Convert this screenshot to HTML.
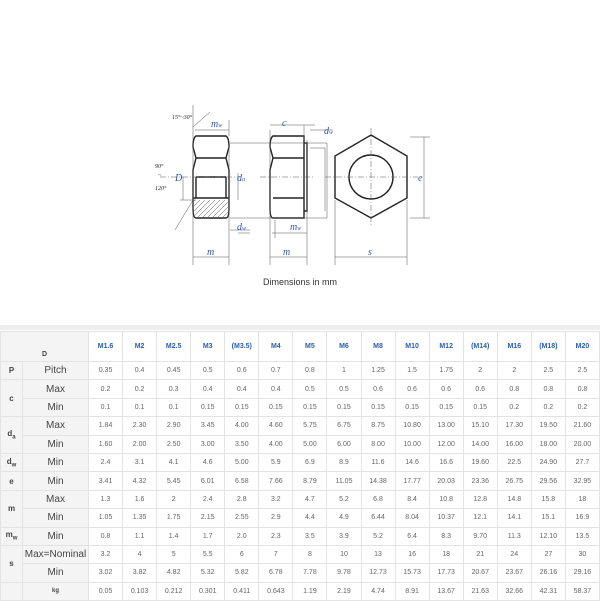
<!DOCTYPE html>
<html><head><meta charset="utf-8"><style>
body{margin:0;width:600px;height:600px;background:#fff;font-family:"Liberation Sans",sans-serif;overflow:hidden;position:relative}
#bar{position:absolute;left:0;top:325px;width:600px;height:5px;background:#eee}
table{position:absolute;left:0;top:331px;border-collapse:collapse;width:600px;table-layout:fixed}
td{border:1px solid #e3e3e3;text-align:center;font-size:7px;color:#666;height:17.4px;padding:0}
.h td{height:26px}
.g{background:#f4f4f4}
.k{font-weight:bold;color:#444;font-size:8px}
.l{font-size:10px;color:#444}
.b{color:#2a5db0;font-weight:bold;font-size:7px}
sub{font-size:6px}
</style></head><body>
<svg width="600" height="300" style="position:absolute;left:0;top:0" font-family="Liberation Serif" font-style="italic">
<g fill="none" stroke="#222" stroke-width="1.4">
<path d="M196 136 H226 Q229 138 229 147 L226 158 L229 170 V208 Q229 218 226 218 H196 Q193 218 193 208 V170 L196 158 L193 147 Q193 138 196 136Z"/>
<path d="M196 158 H226 M196 177 H226 M196 177 V198 M226 177 V198 M193 198 H229"/>
<path d="M273 136 H304 V218 H273 Q270 218 270 208 V170 L273 158 L270 147 Q270 138 273 136Z M273 158 H304 M273 198 H304 M304 143 H307 V211 H304"/>
<polygon points="371,135 407,156 407,198 371,218 335,198 335,156"/>
<circle cx="371" cy="177" r="22"/>
</g>
<g stroke="#555" stroke-width="0.5" fill="none">
<path d="M195 200 L175 220 M200 200 L182 218 M205 200 L187 218 M210 200 L192 218 M215 200 L197 218 M220 200 L202 218 M225 200 L207 218 M229 201 L212 218 M229 206 L217 218 M229 211 L222 218" clip-path="url(#c)"/>
<path d="M193 105 V265 M229 145 V265 M270 130 V265 M307 140 V265 M335 200 V265 M407 200 V265 M193 257 H229 M270 257 H307 M335 257 H407 M230 143 H327 V218 M230 218 H327 M310 148 H325 V211 M424 137 V218 M410 137 H430 M410 218 H430 M195 130 H229 M229 120 V136 M304 125 V140 M270 125 H315 M272 233 H307 M275 220 V238 M310 130 H333 M230 230 H250 M238 233 H250 M238 173 V200 M183 177 V200 M180 200 H196"/>
<path d="M160 177 H240 M260 177 H315 M325 177 H418 M371 128 V225" stroke-dasharray="6 2 1 2"/>
<path d="M193 127 L210 112 M193 200 L175 230"/>
</g>
<clipPath id="c"><rect x="193" y="199" width="36" height="19"/></clipPath>
<g fill="#3355bb" font-size="10">
<text x="211" y="127">m<tspan font-size="6">w</tspan></text>
<text x="175" y="181">D</text>
<text x="237" y="181">d<tspan font-size="6">a</tspan></text>
<text x="237" y="230">d<tspan font-size="6">w</tspan></text>
<text x="207" y="255">m</text>
<text x="283" y="255">m</text>
<text x="282" y="126">c</text>
<text x="324" y="134">d<tspan font-size="6">w</tspan></text>
<text x="290" y="230">m<tspan font-size="6">w</tspan></text>
<text x="418" y="181">e</text>
<text x="368" y="255">s</text>
</g>
<g fill="#222" font-size="6"><text x="172" y="119">15°~30°</text><text x="155" y="168">90°</text><text x="158" y="177">~</text><text x="155" y="190">120°</text></g>
<text x="300" y="285" font-family="Liberation Sans" font-style="normal" font-size="9" fill="#333" text-anchor="middle">Dimensions in mm</text>
</svg>
<div id="bar"></div>
<table>
<colgroup><col style="width:22px"><col style="width:66px"><col span="15"></colgroup>
<tr class="h"><td class="g k" colspan="2" style="font-size:7px;vertical-align:bottom;padding-bottom:3px">D</td><td class="b">M1.6</td><td class="b">M2</td><td class="b">M2.5</td><td class="b">M3</td><td class="b">(M3.5)</td><td class="b">M4</td><td class="b">M5</td><td class="b">M6</td><td class="b">M8</td><td class="b">M10</td><td class="b">M12</td><td class="b">(M14)</td><td class="b">M16</td><td class="b">(M18)</td><td class="b">M20</td></tr>
<tr><td class="g k">P</td><td class="g l">Pitch</td><td>0.35</td><td>0.4</td><td>0.45</td><td>0.5</td><td>0.6</td><td>0.7</td><td>0.8</td><td>1</td><td>1.25</td><td>1.5</td><td>1.75</td><td>2</td><td>2</td><td>2.5</td><td>2.5</td></tr>
<tr><td class="g k" rowspan="2">c</td><td class="g l">Max</td><td>0.2</td><td>0.2</td><td>0.3</td><td>0.4</td><td>0.4</td><td>0.4</td><td>0.5</td><td>0.5</td><td>0.6</td><td>0.6</td><td>0.6</td><td>0.6</td><td>0.8</td><td>0.8</td><td>0.8</td></tr>
<tr><td class="g l">Min</td><td>0.1</td><td>0.1</td><td>0.1</td><td>0.15</td><td>0.15</td><td>0.15</td><td>0.15</td><td>0.15</td><td>0.15</td><td>0.15</td><td>0.15</td><td>0.15</td><td>0.2</td><td>0.2</td><td>0.2</td></tr>
<tr><td class="g k" rowspan="2">d<sub>a</sub></td><td class="g l">Max</td><td>1.84</td><td>2.30</td><td>2.90</td><td>3.45</td><td>4.00</td><td>4.60</td><td>5.75</td><td>6.75</td><td>8.75</td><td>10.80</td><td>13.00</td><td>15.10</td><td>17.30</td><td>19.50</td><td>21.60</td></tr>
<tr><td class="g l">Min</td><td>1.60</td><td>2.00</td><td>2.50</td><td>3.00</td><td>3.50</td><td>4.00</td><td>5.00</td><td>6.00</td><td>8.00</td><td>10.00</td><td>12.00</td><td>14.00</td><td>16.00</td><td>18.00</td><td>20.00</td></tr>
<tr><td class="g k">d<sub>w</sub></td><td class="g l">Min</td><td>2.4</td><td>3.1</td><td>4.1</td><td>4.6</td><td>5.00</td><td>5.9</td><td>6.9</td><td>8.9</td><td>11.6</td><td>14.6</td><td>16.6</td><td>19.60</td><td>22.5</td><td>24.90</td><td>27.7</td></tr>
<tr><td class="g k">e</td><td class="g l">Min</td><td>3.41</td><td>4.32</td><td>5.45</td><td>6.01</td><td>6.58</td><td>7.66</td><td>8.79</td><td>11.05</td><td>14.38</td><td>17.77</td><td>20.03</td><td>23.36</td><td>26.75</td><td>29.56</td><td>32.95</td></tr>
<tr><td class="g k" rowspan="2">m</td><td class="g l">Max</td><td>1.3</td><td>1.6</td><td>2</td><td>2.4</td><td>2.8</td><td>3.2</td><td>4.7</td><td>5.2</td><td>6.8</td><td>8.4</td><td>10.8</td><td>12.8</td><td>14.8</td><td>15.8</td><td>18</td></tr>
<tr><td class="g l">Min</td><td>1.05</td><td>1.35</td><td>1.75</td><td>2.15</td><td>2.55</td><td>2.9</td><td>4.4</td><td>4.9</td><td>6.44</td><td>8.04</td><td>10.37</td><td>12.1</td><td>14.1</td><td>15.1</td><td>16.9</td></tr>
<tr><td class="g k">m<sub>w</sub></td><td class="g l">Min</td><td>0.8</td><td>1.1</td><td>1.4</td><td>1.7</td><td>2.0</td><td>2.3</td><td>3.5</td><td>3.9</td><td>5.2</td><td>6.4</td><td>8.3</td><td>9.70</td><td>11.3</td><td>12.10</td><td>13.5</td></tr>
<tr><td class="g k" rowspan="2">s</td><td class="g l">Max=Nominal</td><td>3.2</td><td>4</td><td>5</td><td>5.5</td><td>6</td><td>7</td><td>8</td><td>10</td><td>13</td><td>16</td><td>18</td><td>21</td><td>24</td><td>27</td><td>30</td></tr>
<tr><td class="g l">Min</td><td>3.02</td><td>3.82</td><td>4.82</td><td>5.32</td><td>5.82</td><td>6.78</td><td>7.78</td><td>9.78</td><td>12.73</td><td>15.73</td><td>17.73</td><td>20.67</td><td>23.67</td><td>26.16</td><td>29.16</td></tr>
<tr><td class="g"></td><td class="g k" style="font-size:6px">kg</td><td>0.05</td><td>0.103</td><td>0.212</td><td>0.301</td><td>0.411</td><td>0.643</td><td>1.19</td><td>2.19</td><td>4.74</td><td>8.91</td><td>13.67</td><td>21.63</td><td>32.66</td><td>42.31</td><td>58.37</td></tr>
</table>
</body></html>
